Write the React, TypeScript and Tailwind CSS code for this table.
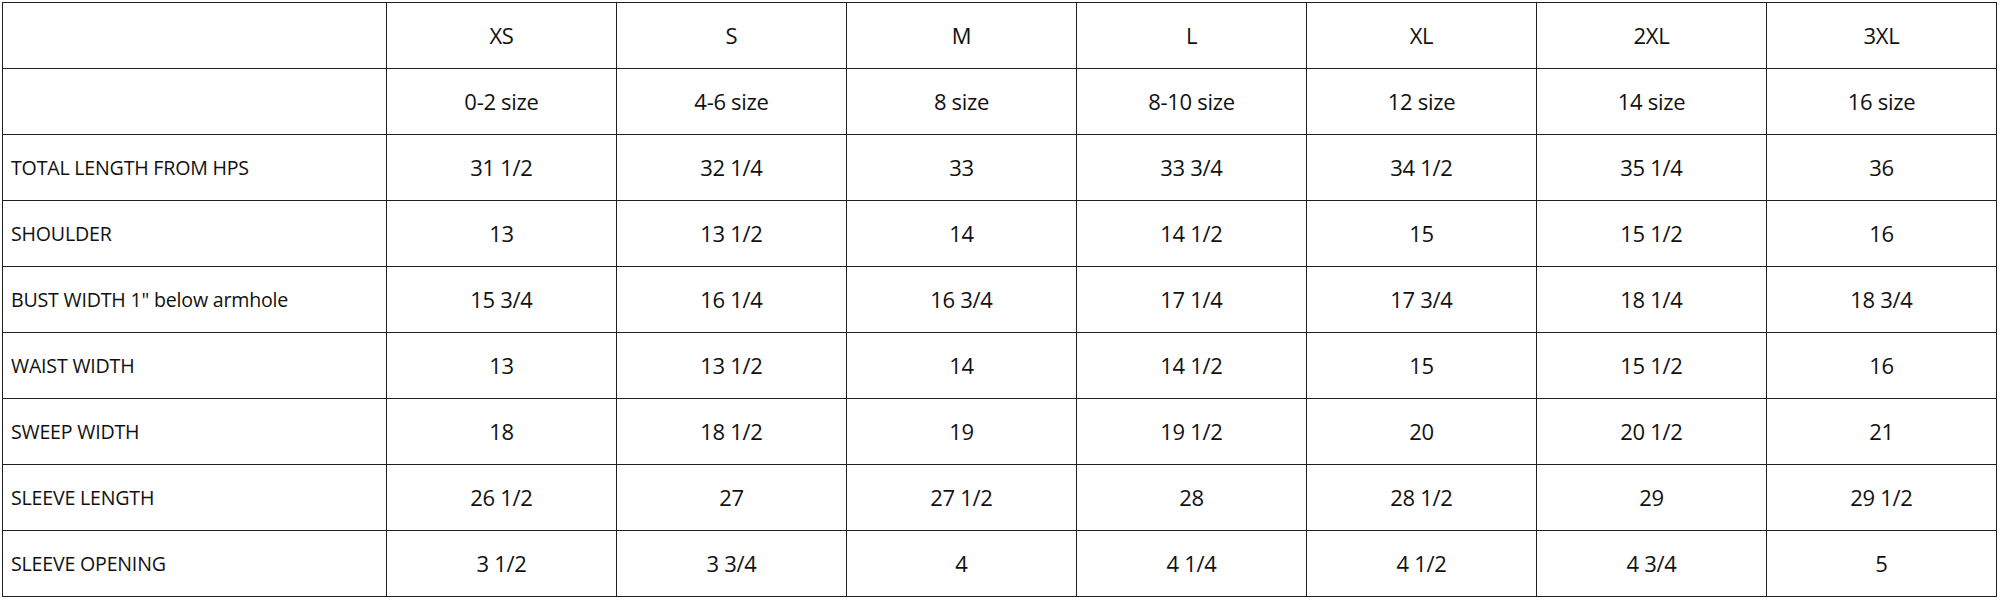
const SIZES = ['XS', 'S', 'M', 'L', 'XL', '2XL', '3XL'];
const NUMERIC = ['0-2 size', '4-6 size', '8 size', '8-10 size', '12 size', '14 size', '16 size'];

const ROWS: { label: string; values: string[] }[] = [
  { label: 'TOTAL LENGTH FROM HPS', values: ['31 1/2', '32 1/4', '33', '33 3/4', '34 1/2', '35 1/4', '36'] },
  { label: 'SHOULDER', values: ['13', '13 1/2', '14', '14 1/2', '15', '15 1/2', '16'] },
  { label: 'BUST WIDTH 1" below armhole', values: ['15 3/4', '16 1/4', '16 3/4', '17 1/4', '17 3/4', '18 1/4', '18 3/4'] },
  { label: 'WAIST WIDTH', values: ['13', '13 1/2', '14', '14 1/2', '15', '15 1/2', '16'] },
  { label: 'SWEEP WIDTH', values: ['18', '18 1/2', '19', '19 1/2', '20', '20 1/2', '21'] },
  { label: 'SLEEVE LENGTH', values: ['26 1/2', '27', '27 1/2', '28', '28 1/2', '29', '29 1/2'] },
  { label: 'SLEEVE OPENING', values: ['3 1/2', '3 3/4', '4', '4 1/4', '4 1/2', '4 3/4', '5'] },
];

const cell = 'border border-[#1f1f1f] h-[66px] p-0';
const val = `${cell} text-center text-[22px] tracking-[-0.3px]`;

export default function App() {
  return (
    <div className="w-[2000px] h-[600px] bg-white pt-[2px] pl-[2px] font-['Open_Sans',sans-serif] text-[#111]">
      <table className="border-collapse table-fixed w-[1995px]">
        <colgroup>
          <col className="w-[384px]" />
          {SIZES.map(s => (
            <col key={s} className="w-[230px]" />
          ))}
        </colgroup>
        <tbody>
          <tr>
            <td className={cell} />
            {SIZES.map(s => (
              <td key={s} className={val}>{s}</td>
            ))}
          </tr>
          <tr>
            <td className={cell} />
            {NUMERIC.map(s => (
              <td key={s} className={val}>{s}</td>
            ))}
          </tr>
          {ROWS.map(row => (
            <tr key={row.label}>
              <td className={`${cell} pl-[8px] text-[19.6px] tracking-[-0.2px]`}>{row.label}</td>
              {row.values.map((v, i) => (
                <td key={i} className={val}>{v}</td>
              ))}
            </tr>
          ))}
        </tbody>
      </table>
    </div>
  );
}
